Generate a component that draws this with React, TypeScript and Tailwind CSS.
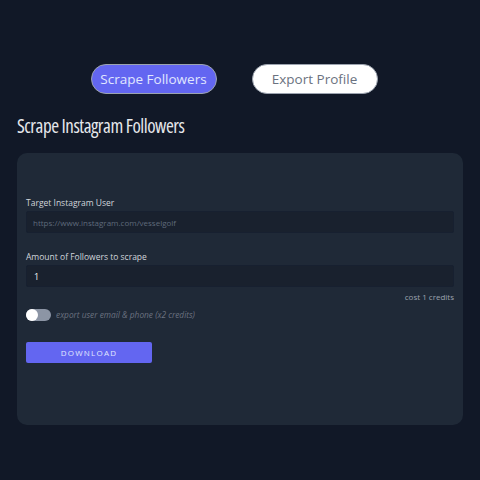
import { useState } from 'react';

export default function App() {
  const [mode, setMode] = useState<'scrape' | 'export'>('scrape');
  const [amount, setAmount] = useState('1');
  const [withContacts, setWithContacts] = useState(false);

  return (
    <div className="min-h-[480px] w-full bg-[#111827] pt-[64px] font-['Open_Sans',sans-serif]">
      {/* Tabs */}
      <div className="flex justify-center gap-[35px] pr-[12px]">
        <button
          onClick={() => setMode('scrape')}
          className={`h-[30px] w-[126px] rounded-full border text-[13.5px] ${
            mode === 'scrape'
              ? 'border-[#9ca3af] bg-[#6366f1] text-[#e0e7ff]'
              : 'border-[#9ca3af] bg-white text-[#6b7280]'
          }`}
        >
          Scrape Followers
        </button>
        <button
          onClick={() => setMode('export')}
          className={`h-[30px] w-[126px] rounded-full border text-[13.5px] ${
            mode === 'export'
              ? 'border-[#9ca3af] bg-[#6366f1] text-[#e0e7ff]'
              : 'border-[#9ca3af] bg-white text-[#6b7280]'
          }`}
        >
          Export Profile
        </button>
      </div>

      <h1 className="mt-[20px] px-[17px] text-[19px] leading-[24px] tracking-[-0.025em] text-[#e5e7eb] font-['Open_Sans',sans-serif] [font-stretch:75%]">
        Scrape Instagram Followers
      </h1>

      {/* Card */}
      <div className="mx-[17px] mt-[15px] h-[272px] rounded-[10px] bg-[#1f2937] px-[9px] pt-[44px]">
        <label className="mb-[2px] block text-[8.5px] leading-[12px] text-[#d1d5db]">Target Instagram User</label>
        <input
          type="text"
          placeholder="https://www.instagram.com/vesselgolf"
          className="block h-[22px] w-full rounded-[2px] border border-[#172030] bg-[#19212e] px-[6px] text-[8px] text-[#e5e7eb] outline-none placeholder:text-[#5f6a7b]"
        />

        <label className="mb-[2px] mt-[18px] block text-[8.5px] leading-[12px] text-[#d1d5db]">
          Amount of Followers to scrape
        </label>
        <input
          type="text"
          value={amount}
          onChange={(e) => setAmount(e.target.value)}
          className="block h-[22px] w-full rounded-[2px] border border-[#172030] bg-[#19212e] px-[7px] text-[9px] text-[#f3f4f6] outline-none"
        />
        <div className="mt-[4px] text-right text-[8px] leading-[12px] text-[#9ca3af]">cost 1 credits</div>

        <div className="mt-[6px] flex items-center gap-[5px]">
          <button
            onClick={() => setWithContacts(!withContacts)}
            className={`relative h-[12px] w-[25px] rounded-full ${withContacts ? 'bg-[#6366f1]' : 'bg-[#8c95a5]'}`}
          >
            <span
              className={`absolute top-0 h-[12px] w-[12px] rounded-full bg-white ${withContacts ? 'left-[13px]' : 'left-0'}`}
            />
          </button>
          <span className="text-[8.3px] italic text-[#6b7280]">export user email &amp; phone (x2 credits)</span>
        </div>

        <button className="mt-[21px] h-[21px] w-[126px] rounded-[2px] bg-[#6366f1] text-[8px] font-medium tracking-[0.15em] text-[#e0e7ff]">
          DOWNLOAD
        </button>
      </div>
    </div>
  );
}
